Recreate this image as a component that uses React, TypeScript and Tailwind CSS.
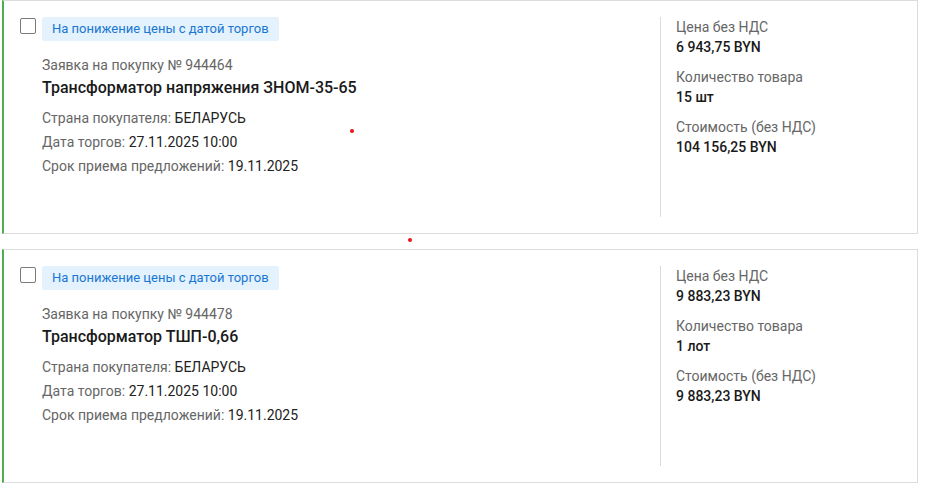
import React from 'react';

interface Lot {
  number: string;
  title: string;
  country: string;
  tradeDate: string;
  deadline: string;
  price: string;
  quantity: string;
  total: string;
}

const lots: Lot[] = [
  {
    number: '944464',
    title: 'Трансформатор напряжения ЗНОМ-35-65',
    country: 'БЕЛАРУСЬ',
    tradeDate: '27.11.2025 10:00',
    deadline: '19.11.2025',
    price: '6 943,75 BYN',
    quantity: '15 шт',
    total: '104 156,25 BYN',
  },
  {
    number: '944478',
    title: 'Трансформатор ТШП-0,66',
    country: 'БЕЛАРУСЬ',
    tradeDate: '27.11.2025 10:00',
    deadline: '19.11.2025',
    price: '9 883,23 BYN',
    quantity: '1 лот',
    total: '9 883,23 BYN',
  },
];

const LotCard: React.FC<{ lot: Lot }> = ({ lot }) => {
  return (
    <div className="flex h-[234px] w-[916px] border border-l-2 border-[#dcdcdc] border-l-[#4caf50] bg-white">
      <div className="flex flex-1 pl-4 pt-4">
        <div className="mt-px h-4 w-4 shrink-0 rounded-[2px] border-[1.5px] border-[#7a7a7a] bg-white" />
        <div className="ml-[6px] flex flex-col">
          <span className="self-start rounded-[2px] bg-[#e3f2fd] px-[10px] text-[13px] leading-6 text-[#1976d2]">
            На понижение цены с датой торгов
          </span>
          <div className="mt-[15px] text-sm leading-[18px] text-[#666]">Заявка на покупку № {lot.number}</div>
          <div className="mt-[3px] text-base font-medium leading-[22px] text-[#1a1a1a]">{lot.title}</div>
          <div className="mt-[9px] flex flex-col gap-1 text-sm leading-5 text-[#666]">
            <div>
              Страна покупателя: <span className="text-[#222]">{lot.country}</span>
            </div>
            <div>
              Дата торгов: <span className="text-[#222]">{lot.tradeDate}</span>
            </div>
            <div>
              Срок приема предложений: <span className="text-[#222]">{lot.deadline}</span>
            </div>
          </div>
        </div>
      </div>
      <div className="my-4 flex w-[257px] shrink-0 flex-col gap-[10px] border-l border-[#dcdcdc] pl-[15px] text-sm leading-5">
        <div>
          <div className="text-[#666]">Цена без НДС</div>
          <div className="font-medium text-[#1a1a1a]">{lot.price}</div>
        </div>
        <div>
          <div className="text-[#666]">Количество товара</div>
          <div className="font-medium text-[#1a1a1a]">{lot.quantity}</div>
        </div>
        <div>
          <div className="text-[#666]">Стоимость (без НДС)</div>
          <div className="font-medium text-[#1a1a1a]">{lot.total}</div>
        </div>
      </div>
    </div>
  );
};

export default function App() {
  return (
    <div className="relative min-h-[485px] w-[925px] bg-white pl-[2px] font-['Roboto',sans-serif]">
      <div className="flex flex-col gap-[15px]">
        {lots.map((lot) => (
          <LotCard key={lot.number} lot={lot} />
        ))}
      </div>
      <span className="absolute left-[350px] top-[129px] h-1 w-1 rounded-full bg-[#e8121c]" />
      <span className="absolute left-[408px] top-[238px] h-1 w-1 rounded-full bg-[#e8121c]" />
    </div>
  );
}
